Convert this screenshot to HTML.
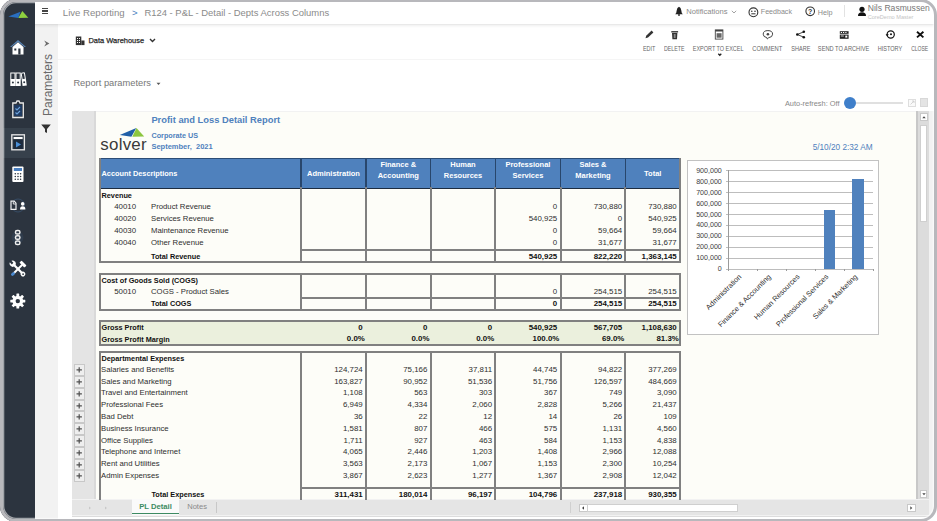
<!DOCTYPE html><html><head><meta charset="utf-8"><style>
html,body{margin:0;padding:0;}
body{width:937px;height:521px;overflow:hidden;position:relative;background:#fff;font-family:"Liberation Sans", sans-serif;}
.t{position:absolute;white-space:pre;}
.b{position:absolute;}
svg{position:absolute;overflow:visible;}
</style></head><body>
<div class="b" style="left:0.00px;top:0.00px;width:937.00px;height:521.00px;background:#ffffff"></div>
<div class="b" style="left:0.00px;top:0.00px;width:35.20px;height:521.00px;background:#2c343f"></div>
<div class="b" style="left:0.00px;top:127.80px;width:35.20px;height:30.70px;background:#37414c"></div>
<svg style="left:0px;top:0px" width="40" height="30" viewBox="0 0 40 30"><polygon points="8.3,16.6 20.5,11.8 18.3,18" fill="#2a6fc0"/><polygon points="18.3,18 22.3,11 28.3,17.8" fill="#8fd13f"/></svg>
<svg style="left:0px;top:0px" width="40" height="330" viewBox="0 0 40 330"><polygon points="10,47 18,40 26,47 24.5,47 18,41.8 11.5,47" fill="#5a86b8"/><path d="M12.5,47 L18,42.3 L23.5,47 L23.5,54.5 L12.5,54.5 Z" fill="#fff"/><rect x="14.3" y="48.5" width="2" height="2" fill="#2c343f"/><rect x="18.3" y="48.5" width="2.2" height="6" fill="#2c343f"/><g stroke="#fff" stroke-width="1" fill="#2c343f"><rect x="10.8" y="73" width="4.2" height="6.5"/><rect x="16" y="73" width="4.2" height="6.5"/><polygon points="21.2,73.3 24.4,72.7 25.4,79.2 22.2,79.6"/></g><rect x="10.3" y="79.5" width="5.2" height="6.5" fill="#fff"/><rect x="15.5" y="79.5" width="5.2" height="6.5" fill="#fff"/><polygon points="21.7,79.6 25.9,79 26.8,85.4 22.6,86" fill="#fff"/><circle cx="12.9" cy="82.5" r="1" fill="#2c343f"/><circle cx="18.1" cy="82.5" r="1" fill="#2c343f"/><circle cx="24.2" cy="82.3" r="1" fill="#2c343f"/><path d="M12.8,103 L16,103 L17,101 L19,101 L20,103 L23.3,103 L23.3,117.5 L12.8,117.5 Z" fill="none" stroke="#e8e8e8" stroke-width="1.3"/><rect x="14.2" y="105" width="7.7" height="11" fill="#1f3b63"/><path d="M15.5,108.5 l1.5,1.5 l3,-3 M15.5,112.5 l1.5,1.5 l3,-3" stroke="#6fa3dc" stroke-width="1.1" fill="none"/><rect x="11.8" y="134.8" width="12.6" height="15" fill="none" stroke="#e8e8e8" stroke-width="1.3"/><rect x="13.6" y="137" width="9" height="2" fill="#fff"/><rect x="13.4" y="139.8" width="9.4" height="9.2" fill="#1c2a3c"/><polygon points="16,141.5 21,144.5 16,147.5" fill="#4a8fd8"/><rect x="12.3" y="166.5" width="11.2" height="15.5" rx="1" fill="#fff"/><rect x="13.8" y="168" width="8.2" height="3" fill="#4a7fc0"/><g fill="#2c343f"><circle cx="15.3" cy="173.8" r="0.8"/><circle cx="18" cy="173.8" r="0.8"/><circle cx="20.6" cy="173.8" r="0.8"/><circle cx="15.3" cy="176.5" r="0.8"/><circle cx="18" cy="176.5" r="0.8"/><circle cx="20.6" cy="176.5" r="0.8"/><circle cx="15.3" cy="179.2" r="0.8"/><circle cx="18" cy="179.2" r="0.8"/><circle cx="20.6" cy="179.2" r="0.8"/></g><circle cx="18" cy="205.5" r="6.5" fill="none" stroke="#3d5a7a" stroke-width="0.8" opacity="0.8"/><path d="M11,201.2 L14.2,201.2 L16,203.2 L16,209.4 L11,209.4 Z" fill="#2c343f" stroke="#f2f2f2" stroke-width="1.2"/><path d="M13.3,201.5 L13.3,204 L15.8,204" fill="none" stroke="#f2f2f2" stroke-width="0.9"/><circle cx="22.7" cy="203.9" r="1.8" fill="#fff"/><path d="M20,209.4 Q20,206.2 22.7,206.2 Q25.4,206.2 25.4,209.4 Z" fill="#fff"/><circle cx="17.5" cy="237.5" r="6" fill="#34465c" opacity="0.5"/><g fill="none" stroke="#eeeeee" stroke-width="1.5"><rect x="15.5" y="230.4" width="4.4" height="3.6" rx="1.6"/><rect x="15.5" y="235.7" width="4.4" height="3.6" rx="1.6"/><rect x="15.5" y="241" width="4.4" height="3.6" rx="1.6"/></g><g transform="rotate(-45 18 269)"><rect x="16.9" y="261" width="2.2" height="14" fill="#fff"/><circle cx="18" cy="261.5" r="3" fill="#fff"/><rect x="16.9" y="257.8" width="2.2" height="3.6" fill="#2c343f"/><circle cx="18" cy="276" r="2.4" fill="#fff"/><circle cx="18" cy="276.2" r="0.9" fill="#2c343f"/></g><g transform="rotate(45 18 269)"><rect x="17" y="263" width="2" height="12" fill="#fff"/><rect x="14.5" y="260.5" width="7" height="3" rx="0.6" fill="#fff"/><rect x="16.6" y="274" width="2.8" height="4.2" rx="1.3" fill="#4b8ad0"/></g><g transform="translate(17.8,301.1)"><circle r="5.4" fill="#fff"/><rect x="-1.4" y="-7.5" width="2.8" height="3.5" rx="0.4" fill="#fff" transform="rotate(0)"/><rect x="-1.4" y="-7.5" width="2.8" height="3.5" rx="0.4" fill="#fff" transform="rotate(45)"/><rect x="-1.4" y="-7.5" width="2.8" height="3.5" rx="0.4" fill="#fff" transform="rotate(90)"/><rect x="-1.4" y="-7.5" width="2.8" height="3.5" rx="0.4" fill="#fff" transform="rotate(135)"/><rect x="-1.4" y="-7.5" width="2.8" height="3.5" rx="0.4" fill="#fff" transform="rotate(180)"/><rect x="-1.4" y="-7.5" width="2.8" height="3.5" rx="0.4" fill="#fff" transform="rotate(225)"/><rect x="-1.4" y="-7.5" width="2.8" height="3.5" rx="0.4" fill="#fff" transform="rotate(270)"/><rect x="-1.4" y="-7.5" width="2.8" height="3.5" rx="0.4" fill="#fff" transform="rotate(315)"/><circle r="2.2" fill="#2c343f"/></g></svg>
<div class="b" style="left:35.20px;top:0.00px;width:902.00px;height:23.50px;background:#fff"></div>
<div class="b" style="left:42.20px;top:8.00px;width:5.80px;height:1.20px;background:#444"></div>
<div class="b" style="left:42.20px;top:10.40px;width:5.80px;height:1.20px;background:#444"></div>
<div class="b" style="left:42.20px;top:12.80px;width:5.80px;height:1.20px;background:#444"></div>
<div class="t" style="left:62.80px;top:8.27px;font-size:9.6px;line-height:9.6px;color:#8a8a8a;font-weight:400;">Live Reporting</div>
<div class="t" style="left:132.00px;top:8.27px;font-size:9.6px;line-height:9.6px;color:#4a7fc0;font-weight:400;">&gt;</div>
<div class="t" style="left:144.40px;top:8.40px;font-size:9.45px;line-height:9.45px;color:#8a8a8a;font-weight:400;">R124 - P&amp;L - Detail - Depts Across Columns</div>
<svg style="left:674px;top:6px" width="10" height="10" viewBox="0 0 10 10"><path d="M5,0.8 Q3,1.5 2.8,4 L2.2,7 L1.2,8.2 L8.8,8.2 L7.8,7 L7.2,4 Q7,1.5 5,0.8 Z" fill="#222"/><circle cx="5" cy="9" r="0.9" fill="#222"/></svg>
<div class="t" style="left:686.20px;top:8.27px;font-size:7.6px;line-height:7.6px;color:#8a8a8a;font-weight:400;">Notifications</div>
<svg style="left:730.5px;top:10px" width="6" height="4" viewBox="0 0 6 4"><path d="M0.8,0.8 L3,3 L5.2,0.8" stroke="#999" stroke-width="0.9" fill="none"/></svg>
<svg style="left:748px;top:6.5px" width="11" height="11" viewBox="0 0 11 11"><circle cx="5.4" cy="5.3" r="4.4" stroke="#333" stroke-width="1.1" fill="none"/><circle cx="3.8" cy="4.3" r="0.8" fill="#333"/><circle cx="7" cy="4.3" r="0.8" fill="#333"/><path d="M3.3,6.8 L7.5,6.8" stroke="#333" stroke-width="1"/></svg>
<div class="t" style="left:760.80px;top:8.69px;font-size:7.1px;line-height:7.1px;color:#8a8a8a;font-weight:400;">Feedback</div>
<svg style="left:804.5px;top:6.3px" width="11" height="11" viewBox="0 0 11 11"><circle cx="5.2" cy="5.3" r="4.3" stroke="#333" stroke-width="1.1" fill="none"/><text x="5.2" y="7.9" font-size="7" font-weight="700" text-anchor="middle" fill="#333" font-family="Liberation Sans">?</text></svg>
<div class="t" style="left:817.70px;top:8.61px;font-size:7.2px;line-height:7.2px;color:#8a8a8a;font-weight:400;">Help</div>
<div class="b" style="left:844.10px;top:5.00px;width:1.00px;height:11.60px;background:#e2e2e2"></div>
<svg style="left:857px;top:6px" width="10" height="11" viewBox="0 0 10 11"><circle cx="5" cy="3.3" r="2.6" fill="#111"/><path d="M1,10 Q1,6.3 5,6.3 Q9,6.3 9,10 Z" fill="#111"/></svg>
<div class="t" style="left:867.70px;top:4.22px;font-size:8.6px;line-height:8.6px;color:#777;font-weight:400;">Nils Rasmussen</div>
<div class="t" style="left:867.70px;top:14.66px;font-size:5.6px;line-height:5.6px;color:#c4c4c4;font-weight:400;">CoreDemo Master</div>
<div class="b" style="left:35.20px;top:23.50px;width:22.80px;height:498.00px;background:#f2f2f2"></div>
<div class="b" style="left:35.20px;top:23.50px;width:902.00px;height:4.00px;background:linear-gradient(rgba(0,0,0,0.11),rgba(0,0,0,0.04) 40%,rgba(0,0,0,0))"></div>
<svg style="left:43px;top:40px" width="9" height="7" viewBox="0 0 9 7"><path d="M1.2,0.6 L6.4,3.5 L1.2,6.4 L3,3.5 Z" fill="#6a6a6a"/></svg>
<div class="t" style="left:7.5px;top:78.5px;width:80px;height:12px;font-size:12px;line-height:12px;color:#6a6a6a;text-align:center;transform:rotate(-90deg);transform-origin:40px 6px;">Parameters</div>
<svg style="left:40px;top:123px" width="12" height="11" viewBox="0 0 12 11"><path d="M1.2,1.5 L10.8,1.5 L7,6 L7,10 L5,9 L5,6 Z" fill="#333"/></svg>
<svg style="left:74.5px;top:35.5px" width="11" height="10" viewBox="0 0 11 10"><rect x="0.8" y="0.5" width="5.5" height="8.6" fill="#333"/><rect x="6.3" y="4.5" width="3.2" height="4.6" fill="#333"/><g fill="#fff"><rect x="2" y="2" width="1" height="1"/><rect x="4" y="2" width="1" height="1"/><rect x="2" y="4" width="1" height="1"/><rect x="4" y="4" width="1" height="1"/><rect x="2" y="6" width="1" height="1"/><rect x="4" y="6" width="1" height="1"/></g></svg>
<div class="t" style="left:88.50px;top:37.29px;font-size:7.45px;line-height:7.45px;color:#2a2a2a;font-weight:400;-webkit-text-stroke:0.25px #2a2a2a">Data Warehouse</div>
<svg style="left:148.5px;top:38.3px" width="7" height="5" viewBox="0 0 7 5"><path d="M1,1 L3.5,3.5 L6,1" stroke="#333" stroke-width="1.4" fill="none"/></svg>
<div class="b" style="left:58.00px;top:58.80px;width:876.00px;height:1.00px;background:#f5f5f5"></div>
<svg style="left:640px;top:28px" width="300" height="30" viewBox="640 28 300 30"><path d="M645.5,38.3 L646.2,35.8 L651.6,30.6 L653.4,32.4 L648,37.6 Z" fill="#333"/><rect x="671.3" y="31.1" width="6.8" height="1.4" fill="#333"/><path d="M672,33 L677.4,33 L677,39.2 L672.4,39.2 Z" fill="#333"/><rect x="673.8" y="34" width="1.8" height="4" fill="#888"/><rect x="715.3" y="29.9" width="7.6" height="9.2" fill="none" stroke="#444" stroke-width="0.9"/><rect x="715.3" y="29.9" width="7.6" height="1.6" fill="#444"/><rect x="716.6" y="33.2" width="5" height="4.5" fill="#666"/><path d="M718.3,51.8 L719.8,53.3 L721.3,51.8" transform="translate(0,2)" stroke="#222" stroke-width="1.3" fill="none"/><path d="M767.9,30.6 Q772.6,30.6 772.6,34.2 Q772.6,37.2 768.7,37.7 L767.3,39 L766.8,37.6 Q763.2,37 763.2,34.2 Q763.2,30.6 767.9,30.6 Z" fill="none" stroke="#444" stroke-width="1"/><circle cx="767.9" cy="34.2" r="1.3" fill="#444"/><g fill="#111"><circle cx="797.3" cy="34.5" r="1.3"/><circle cx="803.8" cy="31.8" r="1.3"/><circle cx="803.8" cy="37.2" r="1.3"/></g><path d="M797.3,34.5 L803.8,31.8 M797.3,34.5 L803.8,37.2" stroke="#111" stroke-width="0.8"/><rect x="839.8" y="31.2" width="8.8" height="2.6" fill="#222"/><rect x="839.8" y="34.6" width="8.8" height="4.2" fill="#222"/><g fill="#fff"><rect x="840.8" y="32" width="1.2" height="1"/><rect x="843" y="32" width="1.2" height="1"/><rect x="845.3" y="32" width="1.2" height="1"/><rect x="840.8" y="35.6" width="3" height="0.8"/><rect x="845.3" y="35.6" width="2" height="2"/></g><circle cx="890.7" cy="34.5" r="3.6" fill="none" stroke="#111" stroke-width="1.2"/><circle cx="891" cy="34.3" r="1" fill="#111"/><polygon points="885.6,34.3 888.8,34.3 887.2,36.6" fill="#111"/><path d="M917,31.7 L923.4,37.4 M923.4,31.7 L917,37.4" stroke="#111" stroke-width="1.9"/></svg>
<div class="t" style="left:599.30px;width:100px;top:45.67px;font-size:6.3px;line-height:6.3px;color:#666;text-align:center;"><span style="display:inline-block;transform:scaleX(0.864)">EDIT</span></div>
<div class="t" style="left:624.25px;width:100px;top:45.67px;font-size:6.3px;line-height:6.3px;color:#666;text-align:center;"><span style="display:inline-block;transform:scaleX(0.836)">DELETE</span></div>
<div class="t" style="left:668.55px;width:100px;top:45.67px;font-size:6.3px;line-height:6.3px;color:#666;text-align:center;"><span style="display:inline-block;transform:scaleX(0.869)">EXPORT TO EXCEL</span></div>
<div class="t" style="left:717.35px;width:100px;top:45.67px;font-size:6.3px;line-height:6.3px;color:#666;text-align:center;"><span style="display:inline-block;transform:scaleX(0.922)">COMMENT</span></div>
<div class="t" style="left:750.60px;width:100px;top:45.67px;font-size:6.3px;line-height:6.3px;color:#666;text-align:center;"><span style="display:inline-block;transform:scaleX(0.875)">SHARE</span></div>
<div class="t" style="left:794.05px;width:100px;top:45.67px;font-size:6.3px;line-height:6.3px;color:#666;text-align:center;"><span style="display:inline-block;transform:scaleX(0.900)">SEND TO ARCHIVE</span></div>
<div class="t" style="left:840.10px;width:100px;top:45.67px;font-size:6.3px;line-height:6.3px;color:#666;text-align:center;"><span style="display:inline-block;transform:scaleX(0.878)">HISTORY</span></div>
<div class="t" style="left:869.35px;width:100px;top:45.67px;font-size:6.3px;line-height:6.3px;color:#666;text-align:center;"><span style="display:inline-block;transform:scaleX(0.800)">CLOSE</span></div>
<div class="t" style="left:73.40px;top:79.33px;font-size:9.3px;line-height:9.3px;color:#777;font-weight:400;">Report parameters</div>
<svg style="left:155.5px;top:81.5px" width="5" height="4" viewBox="0 0 5 4"><path d="M0.5,0.8 L4.5,0.8 L2.5,3 Z" fill="#555"/></svg>
<div class="t" style="left:784.90px;top:100.22px;font-size:7.42px;line-height:7.42px;color:#888;font-weight:400;">Auto-refresh: Off</div>
<div class="b" style="left:856.00px;top:102.00px;width:46.50px;height:1.60px;background:#e0e0e0"></div>
<div class="b" style="left:843.8px;top:96.7px;width:12.2px;height:12.2px;border-radius:50%;background:#3f7fca"></div>
<div class="b" style="left:907.60px;top:98.60px;width:8.00px;height:8.00px;border:1px solid #dedede;box-sizing:border-box;background:#fafafa"></div>
<svg style="left:907.6px;top:98.6px" width="8" height="8" viewBox="0 0 8 8"><path d="M2.5,5.5 L5.8,2.2 M4,2 L6,2 L6,4" stroke="#ccc" stroke-width="0.8" fill="none"/></svg>
<div class="b" style="left:919.70px;top:97.50px;width:8.70px;height:9.50px;background:#e4e4e4;border:1px solid #d8d8d8;box-sizing:border-box"></div>
<div class="b" style="left:72.00px;top:111.00px;width:862.00px;height:405.50px;background:#f2f2f2;border-bottom:1px solid #dcdcdc;box-sizing:border-box"></div>
<div class="b" style="left:72.00px;top:111.00px;width:22.00px;height:388.30px;background:#e4e4e4"></div>
<div class="b" style="left:94.00px;top:111.00px;width:2.20px;height:388.30px;background:#d9d9d9"></div>
<div class="b" style="left:96.20px;top:112.30px;width:821.00px;height:387.00px;background:#fdfdf8"></div>
<div class="b" style="left:917.20px;top:111.00px;width:11.40px;height:388.30px;background:#dcdcdc"></div>
<div class="b" style="left:916.40px;top:111.00px;width:1.60px;height:388.30px;background:#c8c8c8"></div>
<div class="b" style="left:919.50px;top:112.50px;width:8.00px;height:8.50px;background:#fff;border:1px solid #c8c8c8;box-sizing:border-box"></div>
<svg style="left:919.5px;top:112.5px" width="8" height="8.5" viewBox="0 0 8 8.5"><polygon points="2.3,5.3 4,3.3 5.7,5.3" fill="#444"/></svg>
<div class="b" style="left:919.50px;top:124.50px;width:7.80px;height:97.00px;background:#fff;border:1px solid #cfcfcf;box-sizing:border-box"></div>
<div class="b" style="left:919.70px;top:490.00px;width:7.80px;height:8.40px;background:#fff;border:1px solid #c8c8c8;box-sizing:border-box"></div>
<svg style="left:919.7px;top:490px" width="8" height="8.5" viewBox="0 0 8 8.5"><polygon points="2.3,3.3 4,5.3 5.7,3.3" fill="#444"/></svg>
<div class="b" style="left:72.00px;top:499.30px;width:856.60px;height:15.50px;background:#e5e5e5;border-top:1px solid #f2f2f2;box-sizing:border-box"></div>
<svg style="left:85px;top:503px" width="30" height="10" viewBox="0 0 30 10"><polygon points="6,5 4,3.6 4,6.4" transform="translate(0,0) scale(1)" fill="#c9c9c9"/><polygon points="20,3.6 22,5 20,6.4" fill="#c9c9c9"/></svg>
<div class="b" style="left:132.20px;top:499.00px;width:47.30px;height:16.00px;background:#fafafa"></div>
<div class="b" style="left:132.20px;top:512.50px;width:47.30px;height:1.60px;background:#3c8a62"></div>
<div class="t" style="left:139.20px;top:503.31px;font-size:7.67px;line-height:7.67px;color:#3c8a62;font-weight:700;">PL Detail</div>
<div class="t" style="left:187.20px;top:503.38px;font-size:7.58px;line-height:7.58px;color:#8a8a8a;font-weight:400;">Notes</div>
<div class="b" style="left:215.50px;top:502.00px;width:1.00px;height:11.00px;background:#c8c8c8"></div>
<div class="b" style="left:570.20px;top:502.00px;width:1.00px;height:11.00px;background:#d0d0d0"></div>
<div class="b" style="left:579.20px;top:503.90px;width:8.50px;height:7.90px;background:#fff;border:1px solid #c8c8c8;box-sizing:border-box"></div>
<svg style="left:579.2px;top:503.9px" width="8.5" height="8" viewBox="0 0 8.5 8"><polygon points="5,2.3 3,4 5,5.7" fill="#444"/></svg>
<div class="b" style="left:587.20px;top:503.90px;width:151.00px;height:7.90px;background:#fff;border:1px solid #cfcfcf;box-sizing:border-box"></div>
<div class="b" style="left:907.40px;top:503.80px;width:8.30px;height:7.80px;background:#fff;border:1px solid #c8c8c8;box-sizing:border-box"></div>
<svg style="left:907.4px;top:503.8px" width="8.5" height="8" viewBox="0 0 8.5 8"><polygon points="3.3,2.3 5.3,4 3.3,5.7" fill="#444"/></svg>
<svg style="left:118px;top:126px" width="30" height="13" viewBox="0 0 30 13"><polygon points="1.8,8.9 18.3,2.1 13.4,10.7" fill="#1f5fa8"/><polygon points="14.3,10.7 18.5,2 26.2,10.5" fill="#8cc63f"/></svg>
<div class="t" style="left:100.30px;top:136.59px;font-size:16.9px;line-height:16.9px;color:#3a3a3a;font-weight:400;letter-spacing:0.25px">solver</div>
<div class="t" style="left:151.40px;top:116.28px;font-size:9.36px;line-height:9.36px;color:#4f81bd;font-weight:700;">Profit and Loss Detail Report</div>
<div class="t" style="left:151.40px;top:131.66px;font-size:7.25px;line-height:7.25px;color:#4f81bd;font-weight:700;">Corporate US</div>
<div class="t" style="left:151.40px;top:143.45px;font-size:7.5px;line-height:7.5px;color:#4f81bd;font-weight:700;">September,  2021</div>
<div class="t" style="right:64.40px;top:144.02px;font-size:8.24px;line-height:8.24px;color:#4f81bd;font-weight:400;text-align:right;">5/10/20 2:32 AM</div>
<div class="b" style="left:100.00px;top:158.50px;width:580.00px;height:30.00px;background:#4f81bd"></div>
<div class="b" style="left:100.00px;top:158.20px;width:580.00px;height:1.20px;background:#2c4d75"></div>
<div class="b" style="left:100.00px;top:187.80px;width:580.00px;height:1.20px;background:#1c2c40"></div>
<div class="b" style="left:300.35px;top:158.50px;width:1.30px;height:29.90px;background:#28466c"></div>
<div class="b" style="left:365.35px;top:158.50px;width:1.30px;height:29.90px;background:#28466c"></div>
<div class="b" style="left:429.95px;top:158.50px;width:1.30px;height:29.90px;background:#28466c"></div>
<div class="b" style="left:494.75px;top:158.50px;width:1.30px;height:29.90px;background:#28466c"></div>
<div class="b" style="left:559.85px;top:158.50px;width:1.30px;height:29.90px;background:#28466c"></div>
<div class="b" style="left:624.85px;top:158.50px;width:1.30px;height:29.90px;background:#28466c"></div>
<div class="t" style="left:101.50px;top:170.38px;font-size:7.35px;line-height:7.35px;color:#fff;font-weight:700;">Account Descriptions</div>
<div class="t" style="left:233.50px;width:200px;top:170.25px;font-size:7.5px;line-height:7.5px;color:#fff;font-weight:700;text-align:center;">Administration</div>
<div class="t" style="left:298.30px;width:200px;top:161.05px;font-size:7.5px;line-height:7.5px;color:#fff;font-weight:700;text-align:center;">Finance &amp;</div>
<div class="t" style="left:298.30px;width:200px;top:172.15px;font-size:7.5px;line-height:7.5px;color:#fff;font-weight:700;text-align:center;">Accounting</div>
<div class="t" style="left:363.00px;width:200px;top:161.05px;font-size:7.5px;line-height:7.5px;color:#fff;font-weight:700;text-align:center;">Human</div>
<div class="t" style="left:363.00px;width:200px;top:172.15px;font-size:7.5px;line-height:7.5px;color:#fff;font-weight:700;text-align:center;">Resources</div>
<div class="t" style="left:427.95px;width:200px;top:161.05px;font-size:7.5px;line-height:7.5px;color:#fff;font-weight:700;text-align:center;">Professional</div>
<div class="t" style="left:427.95px;width:200px;top:172.15px;font-size:7.5px;line-height:7.5px;color:#fff;font-weight:700;text-align:center;">Services</div>
<div class="t" style="left:493.00px;width:200px;top:161.05px;font-size:7.5px;line-height:7.5px;color:#fff;font-weight:700;text-align:center;">Sales &amp;</div>
<div class="t" style="left:493.00px;width:200px;top:172.15px;font-size:7.5px;line-height:7.5px;color:#fff;font-weight:700;text-align:center;">Marketing</div>
<div class="t" style="left:552.75px;width:200px;top:170.25px;font-size:7.5px;line-height:7.5px;color:#fff;font-weight:700;text-align:center;">Total</div>
<div class="b" style="left:300.00px;top:249.00px;width:381.00px;height:2.00px;background:#808080"></div>
<div class="b" style="left:99.00px;top:261.00px;width:582.00px;height:2.00px;background:#808080"></div>
<div class="b" style="left:99.00px;top:158.00px;width:2.00px;height:105.00px;background:#808080"></div>
<div class="b" style="left:679.00px;top:158.00px;width:2.00px;height:105.00px;background:#808080"></div>
<div class="b" style="left:300.00px;top:187.00px;width:2.00px;height:76.00px;background:#808080"></div>
<div class="b" style="left:365.00px;top:187.00px;width:2.00px;height:76.00px;background:#808080"></div>
<div class="b" style="left:430.00px;top:187.00px;width:2.00px;height:76.00px;background:#808080"></div>
<div class="b" style="left:494.00px;top:187.00px;width:2.00px;height:76.00px;background:#808080"></div>
<div class="b" style="left:560.00px;top:187.00px;width:2.00px;height:76.00px;background:#808080"></div>
<div class="b" style="left:624.00px;top:187.00px;width:2.00px;height:76.00px;background:#808080"></div>
<div class="t" style="left:101.50px;top:192.02px;font-size:7.3px;line-height:7.3px;color:#111;font-weight:700;">Revenue</div>
<div class="t" style="left:114.20px;top:203.31px;font-size:7.9px;line-height:7.9px;color:#2e2e2e;font-weight:400;">40010</div>
<div class="t" style="left:151.00px;top:203.44px;font-size:7.75px;line-height:7.75px;color:#2e2e2e;font-weight:400;">Product Revenue</div>
<div class="t" style="right:379.80px;top:203.31px;font-size:7.9px;line-height:7.9px;color:#2e2e2e;font-weight:400;text-align:right;">0</div>
<div class="t" style="right:314.80px;top:203.31px;font-size:7.9px;line-height:7.9px;color:#2e2e2e;font-weight:400;text-align:right;">730,880</div>
<div class="t" style="right:260.30px;top:203.31px;font-size:7.9px;line-height:7.9px;color:#2e2e2e;font-weight:400;text-align:right;">730,880</div>
<div class="t" style="left:114.20px;top:215.11px;font-size:7.9px;line-height:7.9px;color:#2e2e2e;font-weight:400;">40020</div>
<div class="t" style="left:151.00px;top:215.24px;font-size:7.75px;line-height:7.75px;color:#2e2e2e;font-weight:400;">Services Revenue</div>
<div class="t" style="right:379.80px;top:215.11px;font-size:7.9px;line-height:7.9px;color:#2e2e2e;font-weight:400;text-align:right;">540,925</div>
<div class="t" style="right:314.80px;top:215.11px;font-size:7.9px;line-height:7.9px;color:#2e2e2e;font-weight:400;text-align:right;">0</div>
<div class="t" style="right:260.30px;top:215.11px;font-size:7.9px;line-height:7.9px;color:#2e2e2e;font-weight:400;text-align:right;">540,925</div>
<div class="t" style="left:114.20px;top:226.91px;font-size:7.9px;line-height:7.9px;color:#2e2e2e;font-weight:400;">40030</div>
<div class="t" style="left:151.00px;top:227.04px;font-size:7.75px;line-height:7.75px;color:#2e2e2e;font-weight:400;">Maintenance Revenue</div>
<div class="t" style="right:379.80px;top:226.91px;font-size:7.9px;line-height:7.9px;color:#2e2e2e;font-weight:400;text-align:right;">0</div>
<div class="t" style="right:314.80px;top:226.91px;font-size:7.9px;line-height:7.9px;color:#2e2e2e;font-weight:400;text-align:right;">59,664</div>
<div class="t" style="right:260.30px;top:226.91px;font-size:7.9px;line-height:7.9px;color:#2e2e2e;font-weight:400;text-align:right;">59,664</div>
<div class="t" style="left:114.20px;top:238.71px;font-size:7.9px;line-height:7.9px;color:#2e2e2e;font-weight:400;">40040</div>
<div class="t" style="left:151.00px;top:238.84px;font-size:7.75px;line-height:7.75px;color:#2e2e2e;font-weight:400;">Other Revenue</div>
<div class="t" style="right:379.80px;top:238.71px;font-size:7.9px;line-height:7.9px;color:#2e2e2e;font-weight:400;text-align:right;">0</div>
<div class="t" style="right:314.80px;top:238.71px;font-size:7.9px;line-height:7.9px;color:#2e2e2e;font-weight:400;text-align:right;">31,677</div>
<div class="t" style="right:260.30px;top:238.71px;font-size:7.9px;line-height:7.9px;color:#2e2e2e;font-weight:400;text-align:right;">31,677</div>
<div class="t" style="left:151.00px;top:253.42px;font-size:7.3px;line-height:7.3px;color:#111;font-weight:700;">Total Revenue</div>
<div class="t" style="right:379.80px;top:252.91px;font-size:7.9px;line-height:7.9px;color:#111;font-weight:700;text-align:right;">540,925</div>
<div class="t" style="right:314.80px;top:252.91px;font-size:7.9px;line-height:7.9px;color:#111;font-weight:700;text-align:right;">822,220</div>
<div class="t" style="right:260.30px;top:252.91px;font-size:7.9px;line-height:7.9px;color:#111;font-weight:700;text-align:right;">1,363,145</div>
<div class="b" style="left:99.00px;top:273.00px;width:582.00px;height:2.00px;background:#808080"></div>
<div class="b" style="left:99.00px;top:309.00px;width:582.00px;height:2.00px;background:#808080"></div>
<div class="b" style="left:99.00px;top:273.00px;width:2.00px;height:38.00px;background:#808080"></div>
<div class="b" style="left:679.00px;top:273.00px;width:2.00px;height:38.00px;background:#808080"></div>
<div class="b" style="left:300.00px;top:273.00px;width:2.00px;height:38.00px;background:#808080"></div>
<div class="b" style="left:365.00px;top:273.00px;width:2.00px;height:38.00px;background:#808080"></div>
<div class="b" style="left:430.00px;top:273.00px;width:2.00px;height:38.00px;background:#808080"></div>
<div class="b" style="left:494.00px;top:273.00px;width:2.00px;height:38.00px;background:#808080"></div>
<div class="b" style="left:560.00px;top:273.00px;width:2.00px;height:38.00px;background:#808080"></div>
<div class="b" style="left:624.00px;top:273.00px;width:2.00px;height:38.00px;background:#808080"></div>
<div class="b" style="left:300.00px;top:297.00px;width:381.00px;height:2.00px;background:#808080"></div>
<div class="t" style="left:101.50px;top:277.12px;font-size:7.3px;line-height:7.3px;color:#111;font-weight:700;">Cost of Goods Sold (COGS)</div>
<div class="t" style="left:114.20px;top:288.01px;font-size:7.9px;line-height:7.9px;color:#2e2e2e;font-weight:400;">50010</div>
<div class="t" style="left:151.00px;top:288.14px;font-size:7.75px;line-height:7.75px;color:#2e2e2e;font-weight:400;">COGS - Product Sales</div>
<div class="t" style="right:379.80px;top:288.01px;font-size:7.9px;line-height:7.9px;color:#2e2e2e;font-weight:400;text-align:right;">0</div>
<div class="t" style="right:314.80px;top:288.01px;font-size:7.9px;line-height:7.9px;color:#2e2e2e;font-weight:400;text-align:right;">254,515</div>
<div class="t" style="right:260.30px;top:288.01px;font-size:7.9px;line-height:7.9px;color:#2e2e2e;font-weight:400;text-align:right;">254,515</div>
<div class="t" style="left:151.00px;top:300.42px;font-size:7.3px;line-height:7.3px;color:#111;font-weight:700;">Total COGS</div>
<div class="t" style="right:379.80px;top:299.91px;font-size:7.9px;line-height:7.9px;color:#111;font-weight:700;text-align:right;">0</div>
<div class="t" style="right:314.80px;top:299.91px;font-size:7.9px;line-height:7.9px;color:#111;font-weight:700;text-align:right;">254,515</div>
<div class="t" style="right:260.30px;top:299.91px;font-size:7.9px;line-height:7.9px;color:#111;font-weight:700;text-align:right;">254,515</div>
<div class="b" style="left:100.00px;top:321.10px;width:580.00px;height:23.40px;background:#ebf0dd"></div>
<div class="b" style="left:99.00px;top:320.00px;width:582.00px;height:2.00px;background:#808080"></div>
<div class="b" style="left:99.00px;top:344.00px;width:582.00px;height:2.00px;background:#808080"></div>
<div class="b" style="left:99.00px;top:320.00px;width:2.00px;height:26.00px;background:#808080"></div>
<div class="b" style="left:679.00px;top:320.00px;width:2.00px;height:26.00px;background:#808080"></div>
<div class="t" style="left:101.50px;top:324.02px;font-size:7.3px;line-height:7.3px;color:#111;font-weight:700;">Gross Profit</div>
<div class="t" style="left:101.50px;top:335.52px;font-size:7.3px;line-height:7.3px;color:#111;font-weight:700;">Gross Profit Margin</div>
<div class="t" style="right:574.30px;top:323.51px;font-size:7.9px;line-height:7.9px;color:#111;font-weight:700;text-align:right;">0</div>
<div class="t" style="right:509.70px;top:323.51px;font-size:7.9px;line-height:7.9px;color:#111;font-weight:700;text-align:right;">0</div>
<div class="t" style="right:444.90px;top:323.51px;font-size:7.9px;line-height:7.9px;color:#111;font-weight:700;text-align:right;">0</div>
<div class="t" style="right:379.80px;top:323.51px;font-size:7.9px;line-height:7.9px;color:#111;font-weight:700;text-align:right;">540,925</div>
<div class="t" style="right:314.80px;top:323.51px;font-size:7.9px;line-height:7.9px;color:#111;font-weight:700;text-align:right;">567,705</div>
<div class="t" style="right:260.30px;top:323.51px;font-size:7.9px;line-height:7.9px;color:#111;font-weight:700;text-align:right;">1,108,630</div>
<div class="t" style="right:572.20px;top:335.01px;font-size:7.9px;line-height:7.9px;color:#111;font-weight:700;text-align:right;">0.0%</div>
<div class="t" style="right:507.60px;top:335.01px;font-size:7.9px;line-height:7.9px;color:#111;font-weight:700;text-align:right;">0.0%</div>
<div class="t" style="right:442.80px;top:335.01px;font-size:7.9px;line-height:7.9px;color:#111;font-weight:700;text-align:right;">0.0%</div>
<div class="t" style="right:377.70px;top:335.01px;font-size:7.9px;line-height:7.9px;color:#111;font-weight:700;text-align:right;">100.0%</div>
<div class="t" style="right:312.70px;top:335.01px;font-size:7.9px;line-height:7.9px;color:#111;font-weight:700;text-align:right;">69.0%</div>
<div class="t" style="right:258.20px;top:335.01px;font-size:7.9px;line-height:7.9px;color:#111;font-weight:700;text-align:right;">81.3%</div>
<div class="b" style="left:99.00px;top:351.00px;width:582.00px;height:2.00px;background:#808080"></div>
<div class="b" style="left:99.00px;top:351.00px;width:2.00px;height:149.00px;background:#808080"></div>
<div class="b" style="left:679.00px;top:351.00px;width:2.00px;height:149.00px;background:#808080"></div>
<div class="b" style="left:300.00px;top:351.00px;width:2.00px;height:149.00px;background:#808080"></div>
<div class="b" style="left:365.00px;top:351.00px;width:2.00px;height:149.00px;background:#808080"></div>
<div class="b" style="left:430.00px;top:351.00px;width:2.00px;height:149.00px;background:#808080"></div>
<div class="b" style="left:494.00px;top:351.00px;width:2.00px;height:149.00px;background:#808080"></div>
<div class="b" style="left:560.00px;top:351.00px;width:2.00px;height:149.00px;background:#808080"></div>
<div class="b" style="left:624.00px;top:351.00px;width:2.00px;height:149.00px;background:#808080"></div>
<div class="b" style="left:300.00px;top:487.00px;width:381.00px;height:2.00px;background:#808080"></div>
<div class="t" style="left:101.50px;top:354.72px;font-size:7.3px;line-height:7.3px;color:#111;font-weight:700;">Departmental Expenses</div>
<div class="t" style="left:101.00px;top:365.84px;font-size:7.75px;line-height:7.75px;color:#2e2e2e;font-weight:400;">Salaries and Benefits</div>
<div class="t" style="right:574.30px;top:365.71px;font-size:7.9px;line-height:7.9px;color:#2e2e2e;font-weight:400;text-align:right;">124,724</div>
<div class="t" style="right:509.70px;top:365.71px;font-size:7.9px;line-height:7.9px;color:#2e2e2e;font-weight:400;text-align:right;">75,166</div>
<div class="t" style="right:444.90px;top:365.71px;font-size:7.9px;line-height:7.9px;color:#2e2e2e;font-weight:400;text-align:right;">37,811</div>
<div class="t" style="right:379.80px;top:365.71px;font-size:7.9px;line-height:7.9px;color:#2e2e2e;font-weight:400;text-align:right;">44,745</div>
<div class="t" style="right:314.80px;top:365.71px;font-size:7.9px;line-height:7.9px;color:#2e2e2e;font-weight:400;text-align:right;">94,822</div>
<div class="t" style="right:260.30px;top:365.71px;font-size:7.9px;line-height:7.9px;color:#2e2e2e;font-weight:400;text-align:right;">377,269</div>
<div class="b" style="left:74.40px;top:364.20px;width:10.40px;height:11.80px;background:#eeeeee;border:1px solid #c8c8c8;box-sizing:border-box"></div>
<svg style="left:74.4px;top:364.20px" width="10.4" height="11.8" viewBox="0 0 10.4 11.8"><path d="M5.2,3.2 L5.2,8.6 M2.5,5.9 L7.9,5.9" stroke="#505050" stroke-width="1.2"/></svg>
<div class="t" style="left:101.00px;top:377.64px;font-size:7.75px;line-height:7.75px;color:#2e2e2e;font-weight:400;">Sales and Marketing</div>
<div class="t" style="right:574.30px;top:377.51px;font-size:7.9px;line-height:7.9px;color:#2e2e2e;font-weight:400;text-align:right;">163,827</div>
<div class="t" style="right:509.70px;top:377.51px;font-size:7.9px;line-height:7.9px;color:#2e2e2e;font-weight:400;text-align:right;">90,952</div>
<div class="t" style="right:444.90px;top:377.51px;font-size:7.9px;line-height:7.9px;color:#2e2e2e;font-weight:400;text-align:right;">51,536</div>
<div class="t" style="right:379.80px;top:377.51px;font-size:7.9px;line-height:7.9px;color:#2e2e2e;font-weight:400;text-align:right;">51,756</div>
<div class="t" style="right:314.80px;top:377.51px;font-size:7.9px;line-height:7.9px;color:#2e2e2e;font-weight:400;text-align:right;">126,597</div>
<div class="t" style="right:260.30px;top:377.51px;font-size:7.9px;line-height:7.9px;color:#2e2e2e;font-weight:400;text-align:right;">484,669</div>
<div class="b" style="left:74.40px;top:376.00px;width:10.40px;height:11.80px;background:#eeeeee;border:1px solid #c8c8c8;box-sizing:border-box"></div>
<svg style="left:74.4px;top:376.00px" width="10.4" height="11.8" viewBox="0 0 10.4 11.8"><path d="M5.2,3.2 L5.2,8.6 M2.5,5.9 L7.9,5.9" stroke="#505050" stroke-width="1.2"/></svg>
<div class="t" style="left:101.00px;top:389.44px;font-size:7.75px;line-height:7.75px;color:#2e2e2e;font-weight:400;">Travel and Entertainment</div>
<div class="t" style="right:574.30px;top:389.31px;font-size:7.9px;line-height:7.9px;color:#2e2e2e;font-weight:400;text-align:right;">1,108</div>
<div class="t" style="right:509.70px;top:389.31px;font-size:7.9px;line-height:7.9px;color:#2e2e2e;font-weight:400;text-align:right;">563</div>
<div class="t" style="right:444.90px;top:389.31px;font-size:7.9px;line-height:7.9px;color:#2e2e2e;font-weight:400;text-align:right;">303</div>
<div class="t" style="right:379.80px;top:389.31px;font-size:7.9px;line-height:7.9px;color:#2e2e2e;font-weight:400;text-align:right;">367</div>
<div class="t" style="right:314.80px;top:389.31px;font-size:7.9px;line-height:7.9px;color:#2e2e2e;font-weight:400;text-align:right;">749</div>
<div class="t" style="right:260.30px;top:389.31px;font-size:7.9px;line-height:7.9px;color:#2e2e2e;font-weight:400;text-align:right;">3,090</div>
<div class="b" style="left:74.40px;top:387.80px;width:10.40px;height:11.80px;background:#eeeeee;border:1px solid #c8c8c8;box-sizing:border-box"></div>
<svg style="left:74.4px;top:387.80px" width="10.4" height="11.8" viewBox="0 0 10.4 11.8"><path d="M5.2,3.2 L5.2,8.6 M2.5,5.9 L7.9,5.9" stroke="#505050" stroke-width="1.2"/></svg>
<div class="t" style="left:101.00px;top:401.24px;font-size:7.75px;line-height:7.75px;color:#2e2e2e;font-weight:400;">Professional Fees</div>
<div class="t" style="right:574.30px;top:401.11px;font-size:7.9px;line-height:7.9px;color:#2e2e2e;font-weight:400;text-align:right;">6,949</div>
<div class="t" style="right:509.70px;top:401.11px;font-size:7.9px;line-height:7.9px;color:#2e2e2e;font-weight:400;text-align:right;">4,334</div>
<div class="t" style="right:444.90px;top:401.11px;font-size:7.9px;line-height:7.9px;color:#2e2e2e;font-weight:400;text-align:right;">2,060</div>
<div class="t" style="right:379.80px;top:401.11px;font-size:7.9px;line-height:7.9px;color:#2e2e2e;font-weight:400;text-align:right;">2,828</div>
<div class="t" style="right:314.80px;top:401.11px;font-size:7.9px;line-height:7.9px;color:#2e2e2e;font-weight:400;text-align:right;">5,266</div>
<div class="t" style="right:260.30px;top:401.11px;font-size:7.9px;line-height:7.9px;color:#2e2e2e;font-weight:400;text-align:right;">21,437</div>
<div class="b" style="left:74.40px;top:399.60px;width:10.40px;height:11.80px;background:#eeeeee;border:1px solid #c8c8c8;box-sizing:border-box"></div>
<svg style="left:74.4px;top:399.60px" width="10.4" height="11.8" viewBox="0 0 10.4 11.8"><path d="M5.2,3.2 L5.2,8.6 M2.5,5.9 L7.9,5.9" stroke="#505050" stroke-width="1.2"/></svg>
<div class="t" style="left:101.00px;top:413.04px;font-size:7.75px;line-height:7.75px;color:#2e2e2e;font-weight:400;">Bad Debt</div>
<div class="t" style="right:574.30px;top:412.91px;font-size:7.9px;line-height:7.9px;color:#2e2e2e;font-weight:400;text-align:right;">36</div>
<div class="t" style="right:509.70px;top:412.91px;font-size:7.9px;line-height:7.9px;color:#2e2e2e;font-weight:400;text-align:right;">22</div>
<div class="t" style="right:444.90px;top:412.91px;font-size:7.9px;line-height:7.9px;color:#2e2e2e;font-weight:400;text-align:right;">12</div>
<div class="t" style="right:379.80px;top:412.91px;font-size:7.9px;line-height:7.9px;color:#2e2e2e;font-weight:400;text-align:right;">14</div>
<div class="t" style="right:314.80px;top:412.91px;font-size:7.9px;line-height:7.9px;color:#2e2e2e;font-weight:400;text-align:right;">26</div>
<div class="t" style="right:260.30px;top:412.91px;font-size:7.9px;line-height:7.9px;color:#2e2e2e;font-weight:400;text-align:right;">109</div>
<div class="b" style="left:74.40px;top:411.40px;width:10.40px;height:11.80px;background:#eeeeee;border:1px solid #c8c8c8;box-sizing:border-box"></div>
<svg style="left:74.4px;top:411.40px" width="10.4" height="11.8" viewBox="0 0 10.4 11.8"><path d="M5.2,3.2 L5.2,8.6 M2.5,5.9 L7.9,5.9" stroke="#505050" stroke-width="1.2"/></svg>
<div class="t" style="left:101.00px;top:424.84px;font-size:7.75px;line-height:7.75px;color:#2e2e2e;font-weight:400;">Business Insurance</div>
<div class="t" style="right:574.30px;top:424.71px;font-size:7.9px;line-height:7.9px;color:#2e2e2e;font-weight:400;text-align:right;">1,581</div>
<div class="t" style="right:509.70px;top:424.71px;font-size:7.9px;line-height:7.9px;color:#2e2e2e;font-weight:400;text-align:right;">807</div>
<div class="t" style="right:444.90px;top:424.71px;font-size:7.9px;line-height:7.9px;color:#2e2e2e;font-weight:400;text-align:right;">466</div>
<div class="t" style="right:379.80px;top:424.71px;font-size:7.9px;line-height:7.9px;color:#2e2e2e;font-weight:400;text-align:right;">575</div>
<div class="t" style="right:314.80px;top:424.71px;font-size:7.9px;line-height:7.9px;color:#2e2e2e;font-weight:400;text-align:right;">1,131</div>
<div class="t" style="right:260.30px;top:424.71px;font-size:7.9px;line-height:7.9px;color:#2e2e2e;font-weight:400;text-align:right;">4,560</div>
<div class="b" style="left:74.40px;top:423.20px;width:10.40px;height:11.80px;background:#eeeeee;border:1px solid #c8c8c8;box-sizing:border-box"></div>
<svg style="left:74.4px;top:423.20px" width="10.4" height="11.8" viewBox="0 0 10.4 11.8"><path d="M5.2,3.2 L5.2,8.6 M2.5,5.9 L7.9,5.9" stroke="#505050" stroke-width="1.2"/></svg>
<div class="t" style="left:101.00px;top:436.64px;font-size:7.75px;line-height:7.75px;color:#2e2e2e;font-weight:400;">Office Supplies</div>
<div class="t" style="right:574.30px;top:436.51px;font-size:7.9px;line-height:7.9px;color:#2e2e2e;font-weight:400;text-align:right;">1,711</div>
<div class="t" style="right:509.70px;top:436.51px;font-size:7.9px;line-height:7.9px;color:#2e2e2e;font-weight:400;text-align:right;">927</div>
<div class="t" style="right:444.90px;top:436.51px;font-size:7.9px;line-height:7.9px;color:#2e2e2e;font-weight:400;text-align:right;">463</div>
<div class="t" style="right:379.80px;top:436.51px;font-size:7.9px;line-height:7.9px;color:#2e2e2e;font-weight:400;text-align:right;">584</div>
<div class="t" style="right:314.80px;top:436.51px;font-size:7.9px;line-height:7.9px;color:#2e2e2e;font-weight:400;text-align:right;">1,153</div>
<div class="t" style="right:260.30px;top:436.51px;font-size:7.9px;line-height:7.9px;color:#2e2e2e;font-weight:400;text-align:right;">4,838</div>
<div class="b" style="left:74.40px;top:435.00px;width:10.40px;height:11.80px;background:#eeeeee;border:1px solid #c8c8c8;box-sizing:border-box"></div>
<svg style="left:74.4px;top:435.00px" width="10.4" height="11.8" viewBox="0 0 10.4 11.8"><path d="M5.2,3.2 L5.2,8.6 M2.5,5.9 L7.9,5.9" stroke="#505050" stroke-width="1.2"/></svg>
<div class="t" style="left:101.00px;top:448.44px;font-size:7.75px;line-height:7.75px;color:#2e2e2e;font-weight:400;">Telephone and Internet</div>
<div class="t" style="right:574.30px;top:448.31px;font-size:7.9px;line-height:7.9px;color:#2e2e2e;font-weight:400;text-align:right;">4,065</div>
<div class="t" style="right:509.70px;top:448.31px;font-size:7.9px;line-height:7.9px;color:#2e2e2e;font-weight:400;text-align:right;">2,446</div>
<div class="t" style="right:444.90px;top:448.31px;font-size:7.9px;line-height:7.9px;color:#2e2e2e;font-weight:400;text-align:right;">1,203</div>
<div class="t" style="right:379.80px;top:448.31px;font-size:7.9px;line-height:7.9px;color:#2e2e2e;font-weight:400;text-align:right;">1,408</div>
<div class="t" style="right:314.80px;top:448.31px;font-size:7.9px;line-height:7.9px;color:#2e2e2e;font-weight:400;text-align:right;">2,966</div>
<div class="t" style="right:260.30px;top:448.31px;font-size:7.9px;line-height:7.9px;color:#2e2e2e;font-weight:400;text-align:right;">12,088</div>
<div class="b" style="left:74.40px;top:446.80px;width:10.40px;height:11.80px;background:#eeeeee;border:1px solid #c8c8c8;box-sizing:border-box"></div>
<svg style="left:74.4px;top:446.80px" width="10.4" height="11.8" viewBox="0 0 10.4 11.8"><path d="M5.2,3.2 L5.2,8.6 M2.5,5.9 L7.9,5.9" stroke="#505050" stroke-width="1.2"/></svg>
<div class="t" style="left:101.00px;top:460.24px;font-size:7.75px;line-height:7.75px;color:#2e2e2e;font-weight:400;">Rent and Utilities</div>
<div class="t" style="right:574.30px;top:460.11px;font-size:7.9px;line-height:7.9px;color:#2e2e2e;font-weight:400;text-align:right;">3,563</div>
<div class="t" style="right:509.70px;top:460.11px;font-size:7.9px;line-height:7.9px;color:#2e2e2e;font-weight:400;text-align:right;">2,173</div>
<div class="t" style="right:444.90px;top:460.11px;font-size:7.9px;line-height:7.9px;color:#2e2e2e;font-weight:400;text-align:right;">1,067</div>
<div class="t" style="right:379.80px;top:460.11px;font-size:7.9px;line-height:7.9px;color:#2e2e2e;font-weight:400;text-align:right;">1,153</div>
<div class="t" style="right:314.80px;top:460.11px;font-size:7.9px;line-height:7.9px;color:#2e2e2e;font-weight:400;text-align:right;">2,300</div>
<div class="t" style="right:260.30px;top:460.11px;font-size:7.9px;line-height:7.9px;color:#2e2e2e;font-weight:400;text-align:right;">10,254</div>
<div class="b" style="left:74.40px;top:458.60px;width:10.40px;height:11.80px;background:#eeeeee;border:1px solid #c8c8c8;box-sizing:border-box"></div>
<svg style="left:74.4px;top:458.60px" width="10.4" height="11.8" viewBox="0 0 10.4 11.8"><path d="M5.2,3.2 L5.2,8.6 M2.5,5.9 L7.9,5.9" stroke="#505050" stroke-width="1.2"/></svg>
<div class="t" style="left:101.00px;top:472.04px;font-size:7.75px;line-height:7.75px;color:#2e2e2e;font-weight:400;">Admin Expenses</div>
<div class="t" style="right:574.30px;top:471.91px;font-size:7.9px;line-height:7.9px;color:#2e2e2e;font-weight:400;text-align:right;">3,867</div>
<div class="t" style="right:509.70px;top:471.91px;font-size:7.9px;line-height:7.9px;color:#2e2e2e;font-weight:400;text-align:right;">2,623</div>
<div class="t" style="right:444.90px;top:471.91px;font-size:7.9px;line-height:7.9px;color:#2e2e2e;font-weight:400;text-align:right;">1,277</div>
<div class="t" style="right:379.80px;top:471.91px;font-size:7.9px;line-height:7.9px;color:#2e2e2e;font-weight:400;text-align:right;">1,367</div>
<div class="t" style="right:314.80px;top:471.91px;font-size:7.9px;line-height:7.9px;color:#2e2e2e;font-weight:400;text-align:right;">2,908</div>
<div class="t" style="right:260.30px;top:471.91px;font-size:7.9px;line-height:7.9px;color:#2e2e2e;font-weight:400;text-align:right;">12,042</div>
<div class="b" style="left:74.40px;top:470.40px;width:10.40px;height:11.80px;background:#eeeeee;border:1px solid #c8c8c8;box-sizing:border-box"></div>
<svg style="left:74.4px;top:470.40px" width="10.4" height="11.8" viewBox="0 0 10.4 11.8"><path d="M5.2,3.2 L5.2,8.6 M2.5,5.9 L7.9,5.9" stroke="#505050" stroke-width="1.2"/></svg>
<div class="t" style="left:151.40px;top:491.42px;font-size:7.3px;line-height:7.3px;color:#111;font-weight:700;">Total Expenses</div>
<div class="t" style="right:574.30px;top:490.91px;font-size:7.9px;line-height:7.9px;color:#111;font-weight:700;text-align:right;">311,431</div>
<div class="t" style="right:509.70px;top:490.91px;font-size:7.9px;line-height:7.9px;color:#111;font-weight:700;text-align:right;">180,014</div>
<div class="t" style="right:444.90px;top:490.91px;font-size:7.9px;line-height:7.9px;color:#111;font-weight:700;text-align:right;">96,197</div>
<div class="t" style="right:379.80px;top:490.91px;font-size:7.9px;line-height:7.9px;color:#111;font-weight:700;text-align:right;">104,796</div>
<div class="t" style="right:314.80px;top:490.91px;font-size:7.9px;line-height:7.9px;color:#111;font-weight:700;text-align:right;">237,918</div>
<div class="t" style="right:260.30px;top:490.91px;font-size:7.9px;line-height:7.9px;color:#111;font-weight:700;text-align:right;">930,355</div>
<div class="b" style="left:686.50px;top:159.50px;width:192.20px;height:175.90px;background:#fff;border:1px solid #c2c2c2;box-sizing:border-box"></div>
<div class="b" style="left:726.00px;top:268.70px;width:147.00px;height:1.00px;background:#bdbdbd"></div>
<div class="t" style="right:215.20px;top:266.39px;font-size:7.1px;line-height:7.1px;color:#404040;font-weight:400;text-align:right;">0</div>
<div class="b" style="left:726.00px;top:257.72px;width:147.00px;height:1.00px;background:#bdbdbd"></div>
<div class="t" style="right:215.20px;top:255.41px;font-size:7.1px;line-height:7.1px;color:#404040;font-weight:400;text-align:right;">100,000</div>
<div class="b" style="left:726.00px;top:246.74px;width:147.00px;height:1.00px;background:#bdbdbd"></div>
<div class="t" style="right:215.20px;top:244.43px;font-size:7.1px;line-height:7.1px;color:#404040;font-weight:400;text-align:right;">200,000</div>
<div class="b" style="left:726.00px;top:235.77px;width:147.00px;height:1.00px;background:#bdbdbd"></div>
<div class="t" style="right:215.20px;top:233.46px;font-size:7.1px;line-height:7.1px;color:#404040;font-weight:400;text-align:right;">300,000</div>
<div class="b" style="left:726.00px;top:224.79px;width:147.00px;height:1.00px;background:#bdbdbd"></div>
<div class="t" style="right:215.20px;top:222.48px;font-size:7.1px;line-height:7.1px;color:#404040;font-weight:400;text-align:right;">400,000</div>
<div class="b" style="left:726.00px;top:213.81px;width:147.00px;height:1.00px;background:#bdbdbd"></div>
<div class="t" style="right:215.20px;top:211.50px;font-size:7.1px;line-height:7.1px;color:#404040;font-weight:400;text-align:right;">500,000</div>
<div class="b" style="left:726.00px;top:202.83px;width:147.00px;height:1.00px;background:#bdbdbd"></div>
<div class="t" style="right:215.20px;top:200.52px;font-size:7.1px;line-height:7.1px;color:#404040;font-weight:400;text-align:right;">600,000</div>
<div class="b" style="left:726.00px;top:191.86px;width:147.00px;height:1.00px;background:#bdbdbd"></div>
<div class="t" style="right:215.20px;top:189.55px;font-size:7.1px;line-height:7.1px;color:#404040;font-weight:400;text-align:right;">700,000</div>
<div class="b" style="left:726.00px;top:180.88px;width:147.00px;height:1.00px;background:#bdbdbd"></div>
<div class="t" style="right:215.20px;top:178.57px;font-size:7.1px;line-height:7.1px;color:#404040;font-weight:400;text-align:right;">800,000</div>
<div class="b" style="left:726.00px;top:169.90px;width:147.00px;height:1.00px;background:#bdbdbd"></div>
<div class="t" style="right:215.20px;top:167.59px;font-size:7.1px;line-height:7.1px;color:#404040;font-weight:400;text-align:right;">900,000</div>
<div class="b" style="left:727.50px;top:170.40px;width:1.00px;height:100.80px;background:#9a9a9a"></div>
<div class="b" style="left:727.50px;top:269.20px;width:1.00px;height:2.20px;background:#9a9a9a"></div>
<div class="b" style="left:756.50px;top:269.20px;width:1.00px;height:2.20px;background:#9a9a9a"></div>
<div class="b" style="left:785.50px;top:269.20px;width:1.00px;height:2.20px;background:#9a9a9a"></div>
<div class="b" style="left:814.50px;top:269.20px;width:1.00px;height:2.20px;background:#9a9a9a"></div>
<div class="b" style="left:843.50px;top:269.20px;width:1.00px;height:2.20px;background:#9a9a9a"></div>
<div class="b" style="left:872.50px;top:269.20px;width:1.00px;height:2.20px;background:#9a9a9a"></div>
<div class="b" style="left:823.60px;top:210.30px;width:11.50px;height:58.90px;background:#4f81bd"></div>
<div class="b" style="left:852.40px;top:179.20px;width:11.50px;height:90.00px;background:#4f81bd"></div>
<div class="t" style="right:199.00px;top:273.40px;font-size:7.35px;line-height:7px;color:#303030;transform:rotate(-45deg);transform-origin:100% 0%;">Administration</div>
<div class="t" style="right:170.00px;top:273.40px;font-size:7.35px;line-height:7px;color:#303030;transform:rotate(-45deg);transform-origin:100% 0%;">Finance &amp; Accounting</div>
<div class="t" style="right:141.00px;top:273.40px;font-size:7.35px;line-height:7px;color:#303030;transform:rotate(-45deg);transform-origin:100% 0%;">Human Resources</div>
<div class="t" style="right:112.00px;top:273.40px;font-size:7.35px;line-height:7px;color:#303030;transform:rotate(-45deg);transform-origin:100% 0%;">Professional Services</div>
<div class="t" style="right:83.00px;top:273.40px;font-size:7.35px;line-height:7px;color:#303030;transform:rotate(-45deg);transform-origin:100% 0%;">Sales &amp; Marketing</div>
<div class="b" style="left:-0.2px;top:-1.5px;width:937.3px;height:523.1px;box-sizing:border-box;border:3px solid #b8b8bc;border-radius:16px;box-shadow:0 0 0 30px #fff, inset 0 0 0 1.3px rgba(255,255,255,0.55);"></div>
</body></html>
